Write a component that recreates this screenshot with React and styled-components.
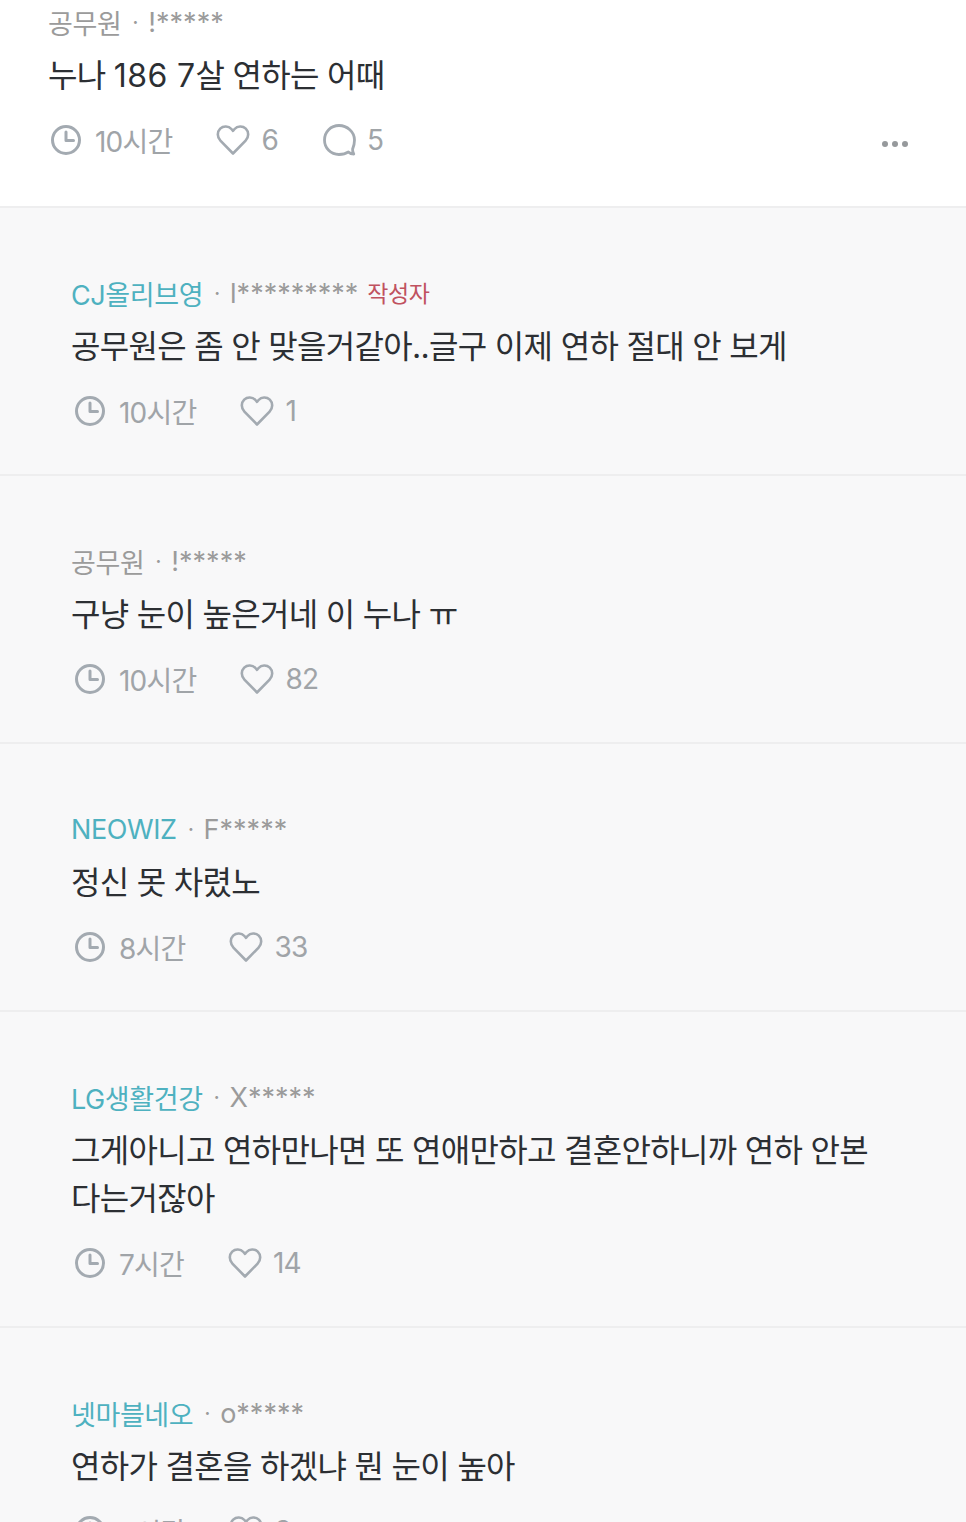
import React from "react";
import styled, { createGlobalStyle } from "styled-components";

const GlobalStyle = createGlobalStyle`
  html, body {
    margin: 0;
    padding: 0;
    background: #f8f8f9;
  }
  body {
    font-family: Inter, "Noto Sans CJK KR", "Noto Sans", sans-serif;
  }
`;

const Page = styled.div`
  width: 966px;
  height: 1522px;
  overflow: hidden;
`;

const Post = styled.section`
  background: #ffffff;
  padding: 7px 48px 0;
  height: 199px;
  border-bottom: 2px solid #eeeeef;
`;

const Meta = styled.div`
  display: flex;
  align-items: center;
  height: 30px;
  font-size: 27px;
  letter-spacing: -0.4px;
  color: #9b9b9b;
  white-space: nowrap;
`;

const Company = styled.span`
  color: ${(props) => (props.$linked ? "#4eb1c0" : "#9b9b9b")};
`;

const Dot = styled.span`
  margin: 0 10px 0 11px;
  font-size: 22px;
`;

const User = styled.span`
  letter-spacing: 0;
`;

const Badge = styled.span`
  margin: 0 0 3px 9px;
  font-size: 23px;
  letter-spacing: -0.4px;
  color: #c0525f;
`;

const Body = styled.p`
  margin: 15px 0 0;
  font-size: 32px;
  line-height: 48px;
  letter-spacing: -0.7px;
  color: #2c2f33;
`;

const Numeral = styled.span`
  letter-spacing: 0.4px;
`;

const Actions = styled.div`
  display: flex;
  align-items: center;
  height: 30px;
  margin-top: 25px;
  font-size: 28px;
  letter-spacing: -0.8px;
  color: #a0a4a8;
`;

const Comment = styled.section`
  background: #f8f8f9;
  padding: 70px 71px 48px;
  border-bottom: 2px solid #eeeeef;

  ${Actions} {
    padding-left: 1px;
  }
`;

const Stat = styled.div`
  display: flex;
  align-items: center;
  gap: 11px;
  margin-right: 44px;
`;

const More = styled.div`
  display: flex;
  gap: 4px;
  margin-left: auto;
  margin-right: 10px;
  padding-top: 8px;
`;

const MoreDot = styled.i`
  width: 6px;
  height: 6px;
  border-radius: 50%;
  background: #96999c;
`;

const Clock = () => (
  <svg width="36" height="36" viewBox="0 0 36 36" fill="none" stroke="#a3aab1" strokeWidth="3" strokeLinecap="round" strokeLinejoin="round">
    <circle cx="18" cy="18" r="13.5" />
    <path d="M18 10v8.500h7.500" />
  </svg>
);

const Heart = () => (
  <svg width="34" height="32" viewBox="0 0 34 32" fill="none" stroke="#a3aab1" strokeWidth="2.6" strokeLinejoin="round">
    <path d="M17 29.500 4.400 16.600C1 13 1 7.800 4.200 4.600c3.200-3 8.300-2.800 11.200.4L17 6.800l1.600-1.800c2.900-3.200 8-3.400 11.200-.4 3.200 3.200 3.200 8.400-.2 12L17 29.500Z" />
  </svg>
);

const Bubble = () => (
  <svg width="34" height="34" viewBox="0 0 34 34" fill="none" stroke="#a3aab1" strokeWidth="2.8" strokeLinejoin="round">
    <path d="M17 2.500C8.800 2.500 2.500 8.800 2.500 17S8.800 31.500 17 31.500c3.600 0 6.800-.8 9.400-2.600 1.400 1.400 3.200 2.200 5.400 2.200-.8-1.400-1.400-3-1.200-5 1.200-2.800 1.900-5.800 1.900-9.100C32.500 8.800 25.200 2.500 17 2.500Z" />
  </svg>
);

const comments = [
  { company: "CJ올리브영", linked: true, user: "l*********", writer: true, text: "공무원은 좀 안 맞을거같아..글구 이제 연하 절대 안 보게", time: "10시간", likes: 1 },
  { company: "공무원", user: "!*****", text: "구냥 눈이 높은거네 이 누나 ㅠ", time: "10시간", likes: 82 },
  { company: "NEOWIZ", linked: true, user: "F*****", text: "정신 못 차렸노", time: "8시간", likes: 33 },
  { company: "LG생활건강", linked: true, user: "X*****", text: "그게아니고 연하만나면 또 연애만하고 결혼안하니까 연하 안본다는거잖아", time: "7시간", likes: 14 },
  { company: "넷마블네오", linked: true, user: "o*****", text: "연하가 결혼을 하겠냐 뭔 눈이 높아", time: "6시간", likes: 3 },
];

const MetaLine = ({ company, linked, user, writer }) => (
  <Meta>
    <Company $linked={linked}>{company}</Company>
    <Dot>·</Dot>
    <User>{user}</User>
    {writer && <Badge>작성자</Badge>}
  </Meta>
);

const App = () => (
  <Page>
    <GlobalStyle />
    <Post>
      <MetaLine company="공무원" user="!*****" />
      <Body>
        누나 <Numeral>186 7</Numeral>살 연하는 어때
      </Body>
      <Actions>
        <Stat>
          <Clock />
          <span>10시간</span>
        </Stat>
        <Stat>
          <Heart />
          <span>6</span>
        </Stat>
        <Stat>
          <Bubble />
          <span>5</span>
        </Stat>
        <More>
          <MoreDot />
          <MoreDot />
          <MoreDot />
        </More>
      </Actions>
    </Post>
    {comments.map((c) => (
      <Comment key={c.user}>
        <MetaLine {...c} />
        <Body>{c.text}</Body>
        <Actions>
          <Stat>
            <Clock />
            <span>{c.time}</span>
          </Stat>
          <Stat>
            <Heart />
            <span>{c.likes}</span>
          </Stat>
        </Actions>
      </Comment>
    ))}
  </Page>
);

export default App;
